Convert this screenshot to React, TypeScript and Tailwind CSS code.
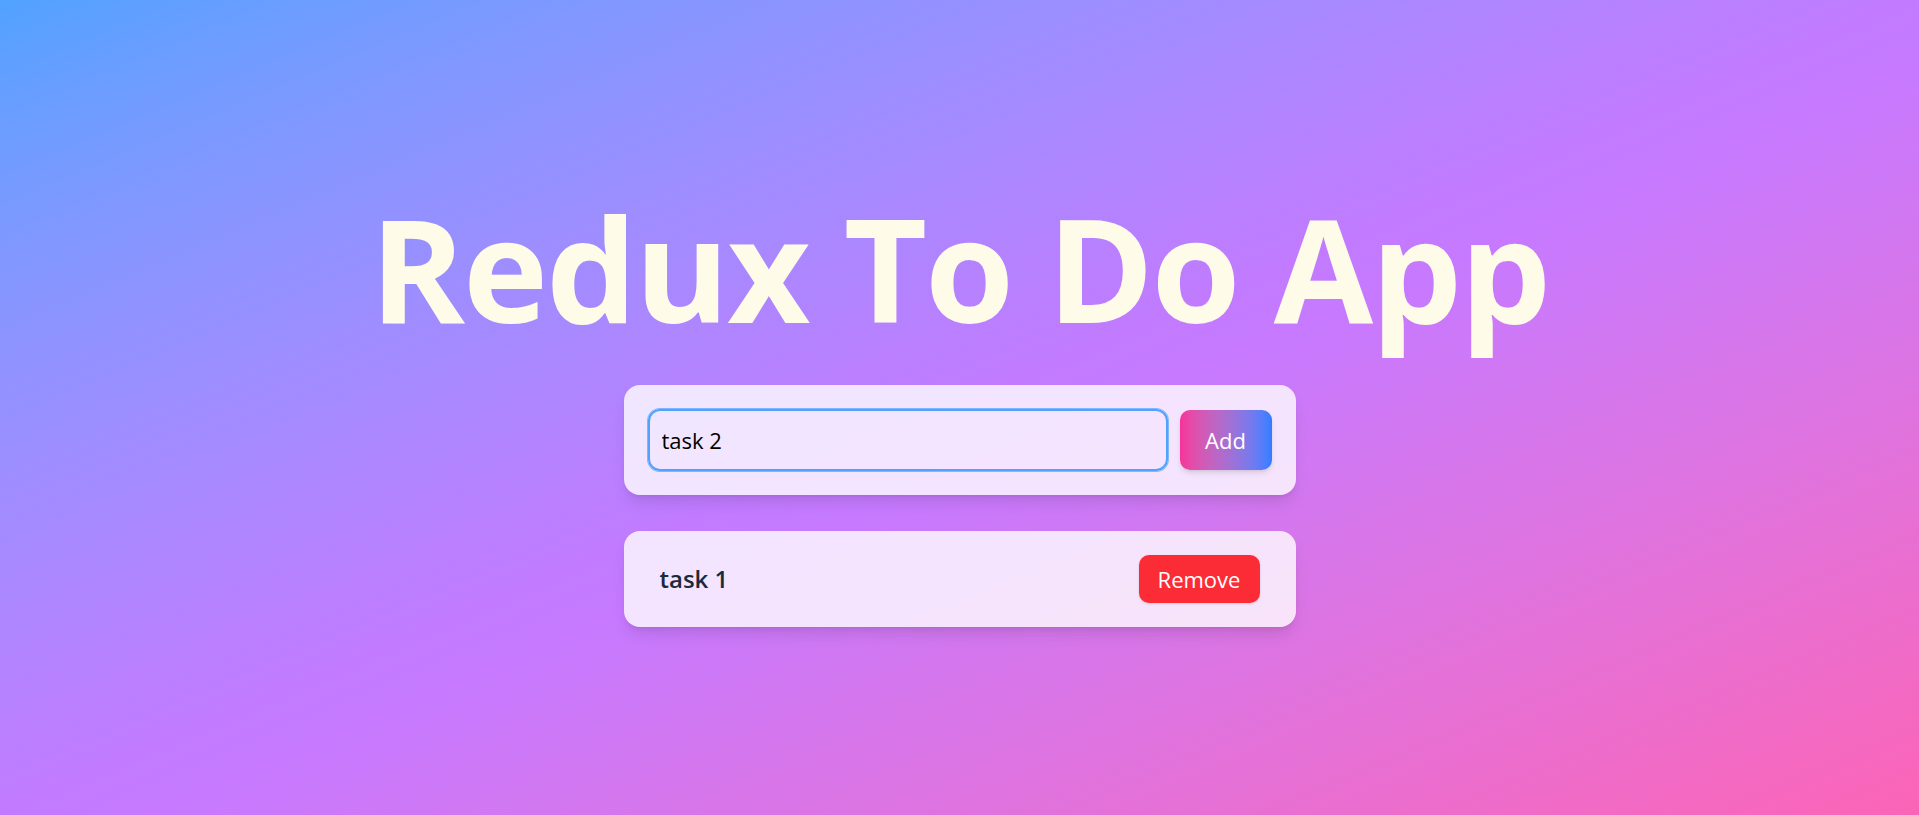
import { useState } from "react";

type Todo = { id: number; text: string };

export default function App() {
  const [todos, setTodos] = useState<Todo[]>([{ id: 1, text: "task 1" }]);
  const [input, setInput] = useState("task 2");

  const addTodo = () => {
    if (!input.trim()) return;
    setTodos([...todos, { id: Date.now(), text: input }]);
    setInput("");
  };

  return (
    <main
      className="min-h-screen w-full flex flex-col items-center pt-[195px] bg-linear-to-br from-blue-400 via-purple-400 to-pink-400"
      style={{ fontFamily: '"Open Sans", "Noto Sans", sans-serif' }}
    >
      <h1 className="text-[144px] leading-none font-bold tracking-[-0.015em] text-yellow-50 text-center mb-[46px]">
        Redux To Do App
      </h1>

      <div className="w-[672px] bg-white/80 rounded-2xl shadow-lg p-6 flex items-center gap-3">
        <input
          value={input}
          onChange={(e) => setInput(e.target.value)}
          className="flex-1 h-[62px] px-3 text-[22px] text-black bg-transparent border-2 border-blue-400 ring-1 ring-blue-400/70 rounded-xl outline-none"
        />
        <button
          onClick={addTodo}
          className="w-[92px] h-[60px] rounded-[10px] text-[22px] text-white bg-linear-to-r from-pink-500 to-blue-500 shadow-md cursor-pointer"
        >
          Add
        </button>
      </div>

      <ul className="w-[672px] mt-[36px] flex flex-col gap-4">
        {todos.map((todo) => (
          <li
            key={todo.id}
            className="bg-white/80 rounded-2xl shadow-lg p-6 flex items-center justify-between"
          >
            <span className="px-3 text-2xl font-semibold text-gray-800">
              {todo.text}
            </span>
            <span className="px-3">
              <button
                onClick={() => setTodos(todos.filter((t) => t.id !== todo.id))}
                className="w-[121px] h-12 rounded-[10px] bg-red-500 text-white text-[22px] shadow-sm cursor-pointer"
              >
                Remove
              </button>
            </span>
          </li>
        ))}
      </ul>
    </main>
  );
}
